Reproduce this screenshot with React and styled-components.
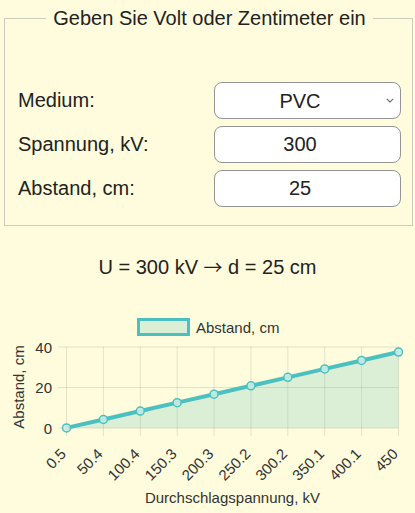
import React from "react";
import styled, { createGlobalStyle } from "styled-components";

const Global = createGlobalStyle`
  html, body { margin: 0; padding: 0; background: #fefcdd; }
  body { font-family: "Liberation Sans", Arial, sans-serif; color: #222; }
  * { box-sizing: border-box; }
`;

const Page = styled.div`
  width: 415px;
  height: 513px;
  overflow: hidden;
  background: #fefcdd;
`;

const Fieldset = styled.fieldset`
  margin: 7px 2px 0 4px;
  padding: 52px 11px 18px 13px;
  border: 1px solid #cbcbbf;
  min-width: 0;
`;

const Legend = styled.legend`
  margin: 0 auto;
  padding: 0 7px;
  font-size: 20px;
  line-height: 23px;
  color: #222;
`;

const Form = styled.div`
  display: grid;
  grid-template-columns: 1fr 187px;
  row-gap: 7px;
  align-items: center;
`;

const Label = styled.label`
  font-size: 20px;
  line-height: 23px;
  color: #222;
`;

const Field = styled.div`
  position: relative;
  height: 37px;
`;

const inputBase = `
  width: 100%;
  height: 37px;
  border: 1px solid #949494;
  border-radius: 8px;
  background: #fff;
  font-family: "Liberation Sans", Arial, sans-serif;
  font-size: 20px;
  color: #222;
  text-align: center;
  outline: none;
  padding: 0 15px 0 0;
`;

const Select = styled.select`
  ${inputBase}
  appearance: none;
  -webkit-appearance: none;
  text-align-last: center;
`;

const Chevron = styled.svg`
  position: absolute;
  right: 7px;
  top: 16px;
  width: 8px;
  height: 5px;
  pointer-events: none;
`;

const Input = styled.input`
  ${inputBase}
`;

const Result = styled.div`
  margin-top: 30px;
  text-align: center;
  font-size: 20px;
  line-height: 23px;
  color: #222;
`;

const Arrow = styled.span`
  font-family: "Noto Sans CJK SC", sans-serif;
  font-size: 19px;
  line-height: 1;
  position: relative;
  top: 1px;
`;

const ChartSvg = styled.svg`
  display: block;
  margin-top: 20px;
  width: 415px;
  height: 213px;
  font-family: "Liberation Sans", Arial, sans-serif;
`;

const TEAL = "rgb(75,192,192)";
const FILL = "rgba(75,192,192,0.2)";
const GRID = "rgba(0,0,0,0.1)";

const labels = ["0.5", "50.4", "100.4", "150.3", "200.3", "250.2", "300.2", "350.1", "400.1", "450"];
const X0 = 66.5;
const X1 = 398.5;
const Y0 = 129;
const YTOP = 48;
const step = (X1 - X0) / (labels.length - 1);
const xs = labels.map((_, i) => X0 + i * step);
const yv = (v) => Y0 - (v * (Y0 - YTOP)) / 40;
const pts = labels.map((l, i) => [xs[i], yv(parseFloat(l) / 12)]);

function Chart() {
  const linePts = pts.map((p) => p.join(",")).join(" ");
  const areaPts = `${X0},${Y0} ${linePts} ${X1},${Y0}`;
  return (
    <ChartSvg viewBox="0 0 415 213">
      <rect x="138.5" y="20.5" width="50" height="15" fill={FILL} stroke={TEAL} strokeWidth="3" />
      <text x="196" y="28" fontSize="15" fill="#333" dominantBaseline="central">Abstand, cm</text>

      {[0, 20, 40].map((v) => (
        <line key={v} x1="58" x2={X1} y1={yv(v)} y2={yv(v)} stroke={GRID} strokeWidth="1" />
      ))}
      {xs.map((x, i) => (
        <line key={i} x1={x} x2={x} y1={YTOP} y2={Y0 + 8} stroke={GRID} strokeWidth="1" />
      ))}

      {[0, 20, 40].map((v) => (
        <text key={v} x="52" y={yv(v)} fontSize="15" fill="#333" textAnchor="end" dominantBaseline="central">{v}</text>
      ))}
      <text transform="translate(18 88) rotate(-90)" fontSize="15" fill="#333" textAnchor="middle" dominantBaseline="central">Abstand, cm</text>

      <polygon points={areaPts} fill={FILL} />
      <polyline points={linePts} fill="none" stroke={TEAL} strokeWidth="4" strokeLinejoin="round" />
      {pts.map(([x, y], i) => (
        <circle key={i} cx={x} cy={y} r="4" fill="rgba(200,236,228,0.9)" stroke={TEAL} strokeWidth="1.5" />
      ))}

      {xs.map((x, i) => (
        <text key={i} transform={`translate(${x - 3.5} 152) rotate(-45)`} fontSize="15" fill="#333" textAnchor="end" dominantBaseline="central">{labels[i]}</text>
      ))}
      <text x="232.5" y="198" fontSize="15" fill="#333" textAnchor="middle" dominantBaseline="central">Durchschlagspannung, kV</text>
    </ChartSvg>
  );
}

export default function App() {
  return (
    <Page>
      <Global />
      <Fieldset>
        <Legend>Geben Sie Volt oder Zentimeter ein</Legend>
        <Form>
          <Label htmlFor="medium">Medium:</Label>
          <Field>
            <Select id="medium" defaultValue="PVC">
              <option value="PVC">PVC</option>
              <option value="Luft">Luft</option>
              <option value="Glas">Glas</option>
            </Select>
            <Chevron viewBox="0 0 8 5">
              <path d="M0.8 0.8 L4 4 L7.2 0.8" fill="none" stroke="#666" strokeWidth="1.1" />
            </Chevron>
          </Field>
          <Label htmlFor="u">Spannung, kV:</Label>
          <Field>
            <Input id="u" defaultValue="300" />
          </Field>
          <Label htmlFor="d">Abstand, cm:</Label>
          <Field>
            <Input id="d" defaultValue="25" />
          </Field>
        </Form>
      </Fieldset>
      <Result>
        U = 300 kV <Arrow>→</Arrow> d = 25 cm
      </Result>
      <Chart />
    </Page>
  );
}
